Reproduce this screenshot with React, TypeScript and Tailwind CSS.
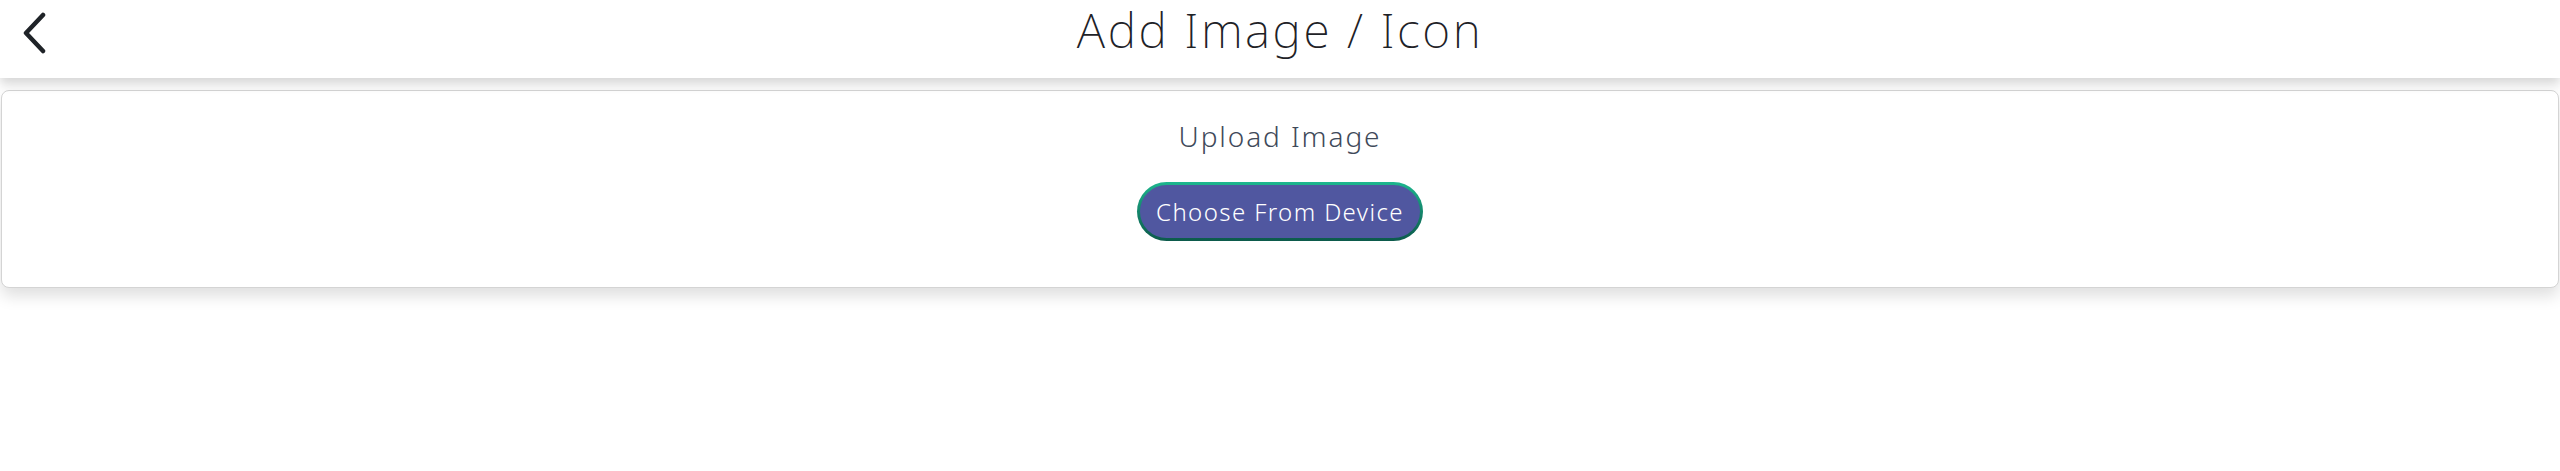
import React from 'react';

function BackIcon() {
  return (
    <svg width="26" height="42" viewBox="0 0 26 42" fill="none">
      <path d="M22 3 L5 21 L22 39" stroke="#1f2328" strokeWidth="4.5" strokeLinecap="round" strokeLinejoin="round" />
    </svg>
  );
}

export default function App() {
  const font = { fontFamily: '"Noto Sans", "Open Sans", sans-serif' };
  return (
    <div className="w-full min-h-[471px] bg-white" style={font}>
      <header className="relative z-10 h-[78px] bg-white flex items-center shadow-[0_6px_10px_rgba(0,0,0,0.16)]">
        <button className="absolute left-[21px] top-[12px] p-0">
          <BackIcon />
        </button>
        <h1 className="flex-1 text-center text-[48px] font-extralight text-[#1e2227] tracking-[2.5px] leading-none -mt-[18px]">
          Add Image / Icon
        </h1>
      </header>
      <div className="pt-[12px] px-[1px]">
        <div className="bg-white border border-[#d4d4d4] rounded-[8px] shadow-[0_8px_16px_rgba(0,0,0,0.13)] h-[198px] flex flex-col items-center">
          <div className="mt-[31px] text-[28px] font-light text-[#3f4a5a] leading-none tracking-[1.9px]">Upload Image</div>
          <div className="mt-[32px] p-[3px] rounded-full bg-gradient-to-b from-[#1db68e] to-[#0c5a4b]">
            <button className="h-[53px] w-[280px] rounded-full bg-[#5057a0] text-white text-[24px] font-light leading-none tracking-[1.4px]">
              Choose From Device
            </button>
          </div>
        </div>
      </div>
    </div>
  );
}
